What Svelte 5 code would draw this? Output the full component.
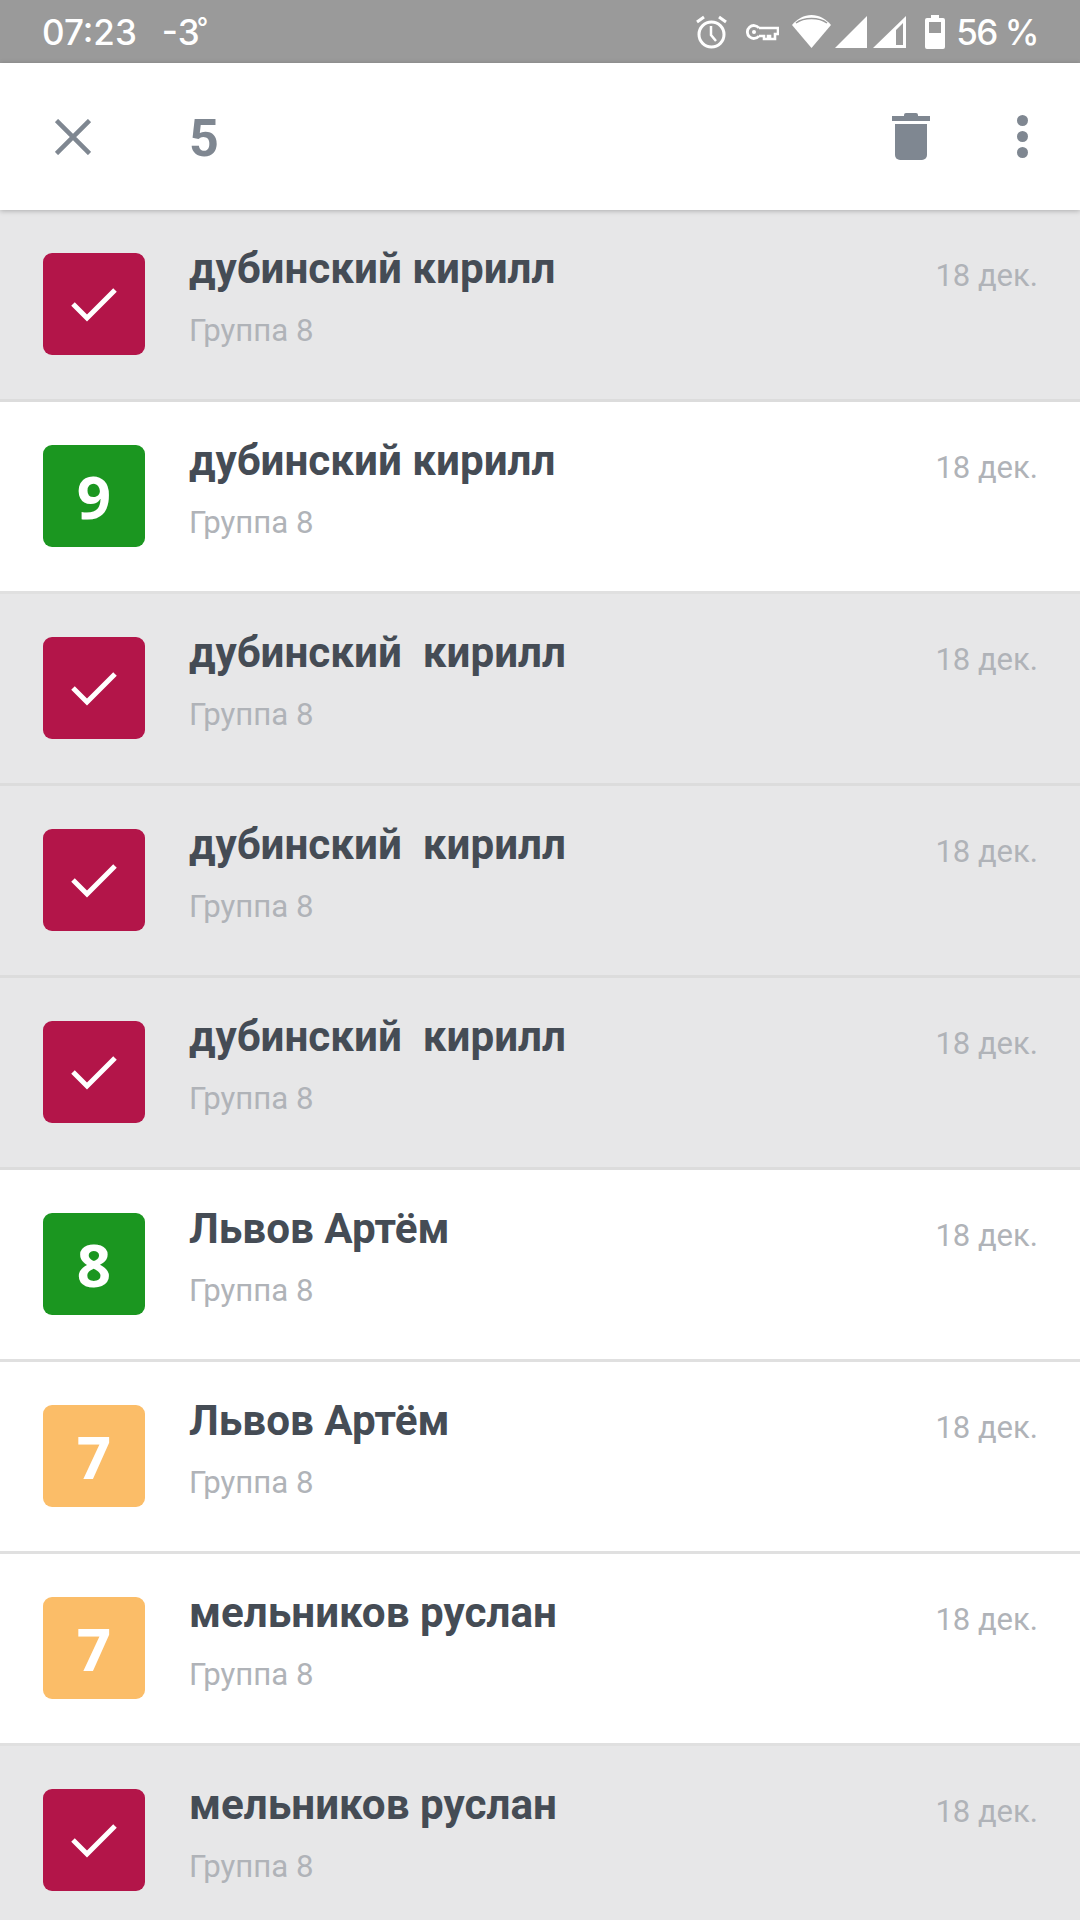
<script>
  const rows = [
    { name: "дубинский кирилл", selected: true },
    { name: "дубинский кирилл", score: 9, color: "green" },
    { name: "дубинский  кирилл", selected: true },
    { name: "дубинский  кирилл", selected: true },
    { name: "дубинский  кирилл", selected: true },
    { name: "Львов Артём", score: 8, color: "green" },
    { name: "Львов Артём", score: 7, color: "orange" },
    { name: "мельников руслан", score: 7, color: "orange" },
    { name: "мельников руслан", selected: true },
  ];
</script>

<div class="screen">
  <div class="status">
    <span class="time">07:23</span>
    <span class="temp">-3<span class="deg">°</span></span>
    <div class="spacer"></div>
    <svg class="ic-alarm" width="31" height="34" viewBox="0 0 31 34">
      <circle cx="15.500" cy="19.500" r="12.500" fill="none" stroke="#fff" stroke-width="3" />
      <path d="M15 11v9l5 6" fill="none" stroke="#fff" stroke-width="2.500" />
      <path d="M1 7l7-5M30 7l-7-5" fill="none" stroke="#fff" stroke-width="3" />
    </svg>
    <svg class="ic-key" width="33" height="18" viewBox="0 0 33 18">
      <path d="M13 5A6.500 6.500 0 1 0 13 13" fill="none" stroke="#fff" stroke-width="2.800" />
      <circle cx="8" cy="9" r="2" fill="#fff" />
      <path d="M13 5h19v6h-3v5h-5v-3h-2v3h-4v-3h-5" fill="none" stroke="#fff" stroke-width="2.600" />
    </svg>
    <svg class="ic-wifi" width="39" height="33" viewBox="0 0 39 33">
      <path d="M19.500 33L0 10C5 4 12 0 19.500 0S34 4 39 10z" fill="#fff" />
      <path d="M4 8C8 5 13 3.500 19.500 3.500S31 5 35 8" fill="none" stroke="#9a9a9a" stroke-width="1.500" />
    </svg>
    <svg class="ic-signal" width="32" height="32" viewBox="0 0 32 32">
      <path d="M0 32L32 0v32z" fill="#fff" />
    </svg>
    <svg class="ic-signal2" width="33" height="32" viewBox="0 0 33 32">
      <path fill-rule="evenodd" d="M0 32L33 0v32zM23 14v15h7V7z" fill="#fff" />
    </svg>
    <svg class="ic-batt" width="20" height="34" viewBox="0 0 20 34">
      <path fill-rule="evenodd" d="M6 0h8v3h4a2 2 0 0 1 2 2v27a2 2 0 0 1-2 2H2a2 2 0 0 1-2-2V5a2 2 0 0 1 2-2h4zM4 7v11h12V7z" fill="#fff" />
    </svg>
    <span class="pct">56 %</span>
  </div>

  <div class="toolbar">
    <svg class="ic-close" width="36" height="36" viewBox="0 0 36 36">
      <path d="M1.500 1.500l33 33M34.500 1.500l-33 33" fill="none" stroke="#7f8791" stroke-width="4.500" />
    </svg>
    <span class="count">5</span>
    <div class="spacer"></div>
    <svg class="ic-trash" width="38" height="47" viewBox="0 0 38 47">
      <path d="M12 2q0-2 2-2h10q2 0 2 2v1h12v5H0V3h12z" fill="#7f8791" />
      <path d="M3 11h32v31a5 5 0 0 1-5 5H8a5 5 0 0 1-5-5z" fill="#7f8791" />
    </svg>
    <div class="dots"><i></i><i></i><i></i></div>
  </div>

  <div class="list">
    {#each rows as row}
      <div class="row" class:selected={row.selected}>
        {#if row.selected}
          <div class="badge crimson">
            <svg width="48" height="36" viewBox="0 0 48 36">
              <path d="M3 18l14 14L45 4" fill="none" stroke="#fff" stroke-width="5" />
            </svg>
          </div>
        {:else}
          <div class="badge {row.color}">{row.score}</div>
        {/if}
        <div class="body">
          <div class="name">{row.name}</div>
          <div class="group">Группа 8</div>
        </div>
        <div class="date">18 дек.</div>
      </div>
    {/each}
  </div>
</div>

<style>
  :global(body) {
    margin: 0;
  }

  .screen {
    width: 1080px;
    height: 1920px;
    overflow: hidden;
    background: #fff;
    font-family: Roboto, sans-serif;
  }

  .spacer {
    flex: 1;
  }

  .status {
    height: 63px;
    box-sizing: border-box;
    background: #9a9a9a;
    color: #fff;
    display: flex;
    align-items: center;
    padding: 0 42px 0 42px;
    font-family: Inter, sans-serif;
    font-size: 35px;
    font-weight: 500;
  }

  .temp {
    margin-left: 25px;
  }

  .deg {
    font-size: 25px;
    vertical-align: 9px;
    margin-left: -3px;
  }

  .ic-key {
    margin-left: 19px;
  }

  .ic-wifi {
    margin-left: 13px;
  }

  .ic-signal {
    margin-left: 4px;
  }

  .ic-signal2 {
    margin-left: 6px;
  }

  .ic-batt {
    margin-left: 19px;
  }

  .pct {
    margin-left: 11px;
    letter-spacing: -1.500px;
  }

  .toolbar {
    height: 147px;
    box-sizing: border-box;
    display: flex;
    align-items: center;
    padding: 0 52px 0 55px;
    position: relative;
    box-shadow: 0 1px 5px rgba(0, 0, 0, 0.25);
  }

  .count {
    margin-left: 98px;
    margin-top: 3px;
    font-size: 52px;
    font-weight: 700;
    color: #7f8791;
  }

  .ic-trash {
    margin-right: 87px;
  }

  .dots {
    display: flex;
    flex-direction: column;
    gap: 5px;
  }

  .dots i {
    display: block;
    width: 11px;
    height: 11px;
    border-radius: 50%;
    background: #7f8791;
  }

  .row {
    height: 192px;
    box-sizing: border-box;
    display: flex;
    align-items: flex-start;
    padding: 43px 42px 0 43px;
    border-bottom: 3px solid #e0e0e0;
    background: #fff;
  }

  .row.selected {
    background: #e7e7e8;
    border-bottom-color: #dcdcdc;
  }

  .badge {
    width: 102px;
    height: 102px;
    border-radius: 9px;
    display: flex;
    align-items: center;
    justify-content: center;
    color: #fff;
    font-family: "Noto Sans", sans-serif;
    font-size: 60px;
    font-weight: 700;
    flex: none;
  }

  .crimson {
    background: #b31549;
  }

  .green {
    background: #1b9620;
  }

  .orange {
    background: #fbbd68;
  }

  .body {
    flex: 1;
    margin-left: 44px;
    margin-top: -9px;
  }

  .name {
    font-size: 42.200px;
    font-weight: 700;
    color: #454c55;
    line-height: 50px;
    white-space: pre;
  }

  .group {
    margin-top: 19px;
    font-size: 31.200px;
    color: #b0b3b8;
    line-height: 36px;
  }

  .date {
    margin-top: 5px;
    font-size: 31px;
    color: #b0b3b8;
    line-height: 36px;
  }
</style>
